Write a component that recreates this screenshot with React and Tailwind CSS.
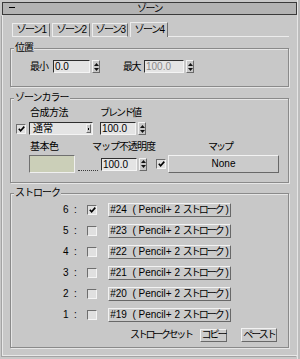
import React from 'react'

const FONT = "font-['Liberation_Sans','Noto_Sans_CJK_JP',sans-serif]"

function Spinner() {
  return (
    <div className="w-[8px] h-[13px] flex flex-col items-center justify-center gap-[2px] bg-[#c8c8c8] border border-t-[#f2f2f2] border-l-[#f2f2f2] border-r-[#6a6a6a] border-b-[#6a6a6a]">
      <svg width="5" height="3" viewBox="0 0 5 3">
        <path d="M2.5 0 L5 3 L0 3 Z" fill="#111" />
      </svg>
      <svg width="5" height="3" viewBox="0 0 5 3">
        <path d="M0 0 L5 0 L2.5 3 Z" fill="#111" />
      </svg>
    </div>
  )
}

function Field({ value, className, dim }) {
  return (
    <div
      className={`h-[13px] pl-[1px] bg-[#e4e4e4] border border-t-[#2e2e2e] border-l-[#2e2e2e] border-r-[#f4f4f4] border-b-[#f4f4f4] text-[10px] leading-[11px] ${
        dim ? 'text-[#8a8a8a]' : 'text-black'
      } ${className}`}
    >
      {value}
    </div>
  )
}

function Check({ checked }) {
  return (
    <div className="w-[10px] h-[10px] shrink-0 flex items-center justify-center bg-[#e0e0e0] border border-t-[#6e6e6e] border-l-[#6e6e6e] border-r-[#f4f4f4] border-b-[#f4f4f4]">
      {checked && (
        <svg width="7" height="6" viewBox="0 0 7 6">
          <path d="M0.8 2.8 L2.6 4.8 L6.3 0.6" stroke="#000" strokeWidth="1.6" fill="none" />
        </svg>
      )}
    </div>
  )
}

function Btn({ children, className }) {
  return (
    <div
      className={`flex items-center justify-center bg-[#cbcbcb] border border-t-[#f2f2f2] border-l-[#f2f2f2] border-r-[#686868] border-b-[#686868] text-[10px] leading-none text-black ${className}`}
    >
      {children}
    </div>
  )
}

function Group({ label, className, children }) {
  return (
    <div
      className={`relative ml-[7px] w-[279px] border border-[#8a8a8a] shadow-[inset_1px_1px_0_#e6e6e6,1px_1px_0_#e6e6e6] ${className}`}
    >
      <span className="absolute left-[3px] top-[-7px] px-[1px] bg-[#c8c8c8] text-[10px] leading-[12px] tracking-[-1px] text-black">
        {label}
      </span>
      {children}
    </div>
  )
}

const strokes = [
  { n: 6, id: 24, on: true },
  { n: 5, id: 23 },
  { n: 4, id: 22 },
  { n: 3, id: 21 },
  { n: 2, id: 20 },
  { n: 1, id: 19 },
]

const tabs = [
  { t: 'ゾーン1', w: 'w-[38px]' },
  { t: 'ゾーン2', w: 'w-[38px]' },
  { t: 'ゾーン3', w: 'w-[36px]' },
]

export default function App() {
  return (
    <div className={`w-[300px] h-[359px] bg-[#c8c8c8] flex overflow-hidden text-black ${FONT}`}>
      <div className="w-[297px] flex flex-col pt-[2px] pl-[2px]">
        {/* rollout title */}
        <div className="relative h-[13px] w-[295px] bg-[#b3b3b3] border border-[#3a3a3a] flex items-center justify-center">
          <span className="absolute left-[6px] top-[4px] w-[6px] h-[1px] bg-black" />
          <span className="text-[10px] leading-none tracking-[-1.5px]">ゾーン</span>
        </div>

        <div className="w-[295px] h-[341px] border-l border-b border-[#e8e8e8] shadow-[-1px_1px_0_#a4a4a4]">
          {/* tabs */}
          <div className="mt-[7px] ml-[9px] w-[277px] h-[15px] flex items-end">
            {tabs.map((tab) => (
              <div
                key={tab.t}
                className={`${tab.w} h-[14px] mr-[2px] flex items-center justify-center border-t border-l border-r border-t-[#ececec] border-l-[#ececec] border-r-[#6e6e6e] text-[10px] leading-none tracking-[-1.5px] border-b border-b-[#ececec]`}
              >
                {tab.t}
              </div>
            ))}
            <div className="w-[38px] h-[15px] flex items-center justify-center border-t border-l border-r border-t-[#ececec] border-l-[#ececec] border-r-[#6e6e6e] text-[10px] leading-none tracking-[-1.5px]">
              ゾーン4
            </div>
            <div className="flex-1 h-[1px] bg-[#ececec]" />
          </div>

          {/* 位置 */}
          <Group label="位置" className="mt-[11px] h-[39px] pt-[11px] pl-[19px]">
            <div className="flex items-center h-[13px] text-[10px] leading-none">
              <span className="w-[23px] tracking-[-1px]">最小</span>
              <Field value="0.0" className="w-[37px]" />
              <div className="ml-[2px]">
                <Spinner />
              </div>
              <span className="ml-[23px] w-[21px] tracking-[-1.5px]">最大</span>
              <Field value="100.0" className="w-[40px]" dim />
              <div className="ml-[2px]">
                <Spinner />
              </div>
            </div>
          </Group>

          {/* ゾーンカラー */}
          <Group label="ゾーンカラー" className="mt-[11px] h-[85px] pt-[9px]">
            <div className="flex h-[10px] text-[10px] leading-[10px]">
              <span className="ml-[19px] w-[70px] tracking-[-0.5px]">合成方法</span>
              <span className="tracking-[-2px]">ブレンド値</span>
            </div>
            <div className="mt-[4px] flex items-center h-[13px]">
              <div className="ml-[5px]">
                <Check checked />
              </div>
              <div className="ml-[3px] w-[64px] h-[13px] flex items-center justify-between pl-[3px] pr-[1px] bg-[#e4e4e4] border border-t-[#2e2e2e] border-l-[#2e2e2e] border-r-[#f4f4f4] border-b-[#f4f4f4] text-[10px] leading-none">
                <span>通常</span>
                <span className="w-[5px] h-[9px] flex items-center justify-center bg-[#c8c8c8] border border-t-[#f2f2f2] border-l-[#f2f2f2] border-r-[#6a6a6a] border-b-[#6a6a6a]">
                  <span className="w-[1px] h-[2px] bg-black" />
                </span>
              </div>
              <Field value="100.0" className="ml-[7px] w-[36px]" />
              <div className="ml-[2px]">
                <Spinner />
              </div>
            </div>
            <div className="mt-[7px] flex h-[10px] text-[10px] leading-[10px]">
              <span className="ml-[19px] w-[62px] tracking-[-0.5px]">基本色</span>
              <span className="w-[116px] tracking-[-1px]">マップ不透明度</span>
              <span className="tracking-[-2px]">マップ</span>
            </div>
            <div className="mt-[3px] flex items-center h-[18px]">
              <div className="ml-[18px] w-[46px] h-[18px] bg-[#cbcfb8] border border-t-[#707070] border-l-[#707070] border-r-[#f0f0f0] border-b-[#f0f0f0]" />
              <div className="ml-[3px] w-[20px] self-end mb-[2px] border-b border-dotted border-[#3a3a3a]" />
              <Field value="100.0" className="ml-[3px] w-[36px]" />
              <div className="ml-[2px]">
                <Spinner />
              </div>
              <div className="ml-[9px]">
                <Check checked />
              </div>
              <Btn className="ml-[2px] w-[111px] h-[18px]">None</Btn>
            </div>
          </Group>

          {/* ストローク */}
          <Group label="ストローク" className="mt-[10px] h-[155px] pt-[9px]">
            <div className="flex flex-col gap-[7px]">
              {strokes.map((s) => (
                <div key={s.n} className="flex items-center h-[14px] pl-[52px]">
                  <span className="w-[24px] text-[10px] leading-none whitespace-pre">{s.n}  :</span>
                  <Check checked={s.on} />
                  <Btn className="ml-[11px] w-[123px] h-[14px]">
                    <span className="whitespace-pre">
                      #{s.id}  ( Pencil+ 2 <span className="tracking-[-2px]">ストローク</span> )
                    </span>
                  </Btn>
                </div>
              ))}
            </div>
            <div className="mt-[6px] flex items-center h-[14px]">
              <span className="ml-[119px] w-[70px] text-[10px] leading-none tracking-[-2.3px]">ストロークセット</span>
              <Btn className="w-[27px] h-[13px]">
                <span className="tracking-[-2px]">コピー</span>
              </Btn>
              <Btn className="ml-[14px] w-[36px] h-[14px]">
                <span className="tracking-[-2px]">ペースト</span>
              </Btn>
            </div>
          </Group>
        </div>
      </div>
      <div className="w-[3px] h-full border-l border-[#e6e6e6] bg-[#bdbdbd]" />
    </div>
  )
}
